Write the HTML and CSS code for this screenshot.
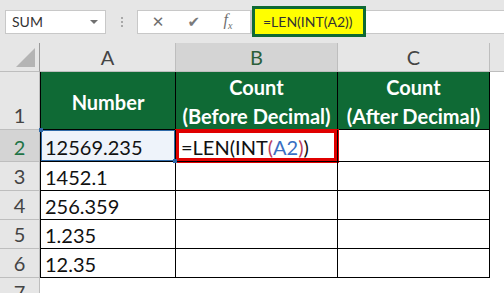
FILE: index.html
```html
<!DOCTYPE html>
<html lang="en">
<head>
  <meta charset="UTF-8">
  <title>LEN INT</title>
  <link rel="stylesheet" href="styles.css">
</head>
<body>
  <div class="topbar">
    <div class="namebox">
      <span>SUM</span>
      <span class="caret"></span>
    </div>
    <div class="grip"><i></i><i></i><i></i></div>
    <div class="fxbox">
      <span class="btn">&#x2715;</span>
      <span class="btn check">&#x2714;</span>
      <span class="btn fx">f<sub>x</sub></span>
    </div>
    <div class="formulabar">
      <div class="formula-hl">=LEN(INT(A2))</div>
    </div>
  </div>

  <div class="sheet">
    <div class="hd corner"><span class="tri"></span></div>
    <div class="hd col">A</div>
    <div class="hd col active">B</div>
    <div class="hd col">C</div>
    <div class="hd col rest"></div>

    <div class="hd row">1</div>
    <div class="cell title first">Number</div>
    <div class="cell title">Count<br>(Before Decimal)</div>
    <div class="cell title">Count<br>(After Decimal)</div>
    <div class="cell blank"></div>

    <div class="hd row active">2</div>
    <div class="cell first ref">12569.235</div>
    <div class="cell editing">=LEN(INT<span class="p">(</span><span class="a">A2</span><span class="p">)</span>)</div>
    <div class="cell"></div>
    <div class="cell blank"></div>

    <div class="hd row">3</div>
    <div class="cell first">1452.1</div>
    <div class="cell"></div>
    <div class="cell"></div>
    <div class="cell blank"></div>

    <div class="hd row">4</div>
    <div class="cell first">256.359</div>
    <div class="cell"></div>
    <div class="cell"></div>
    <div class="cell blank"></div>

    <div class="hd row">5</div>
    <div class="cell first">1.235</div>
    <div class="cell"></div>
    <div class="cell"></div>
    <div class="cell blank"></div>

    <div class="hd row">6</div>
    <div class="cell first">12.35</div>
    <div class="cell"></div>
    <div class="cell"></div>
    <div class="cell blank"></div>

    <div class="hd row">7</div>
    <div class="cell blank"></div>
    <div class="cell blank"></div>
    <div class="cell blank"></div>
    <div class="cell blank"></div>
  </div>
</body>
</html>
```

FILE: styles.css
```css
* {
  box-sizing: border-box;
}

body {
  margin: 0;
  width: 504px;
  height: 293px;
  overflow: hidden;
  background: #fff;
  font-family: Lato, "Open Sans", sans-serif;
  color: #111;
}

.topbar {
  height: 43px;
  background: #e6e6e6;
  display: flex;
  align-items: center;
  padding-left: 5px;
}

.namebox {
  width: 101px;
  height: 24px;
  background: #fff;
  border: 1px solid #c8c8c8;
  display: flex;
  align-items: center;
  justify-content: space-between;
  padding: 0 7px 0 6px;
  font-size: 14px;
  color: #333;
}

.caret {
  width: 0;
  height: 0;
  border-left: 4px solid transparent;
  border-right: 4px solid transparent;
  border-top: 4px solid #707070;
}

.grip {
  width: 31px;
  display: flex;
  flex-direction: column;
  align-items: center;
  gap: 2px;
}

.grip i {
  width: 2px;
  height: 2px;
  background: #a8a8a8;
}

.fxbox {
  width: 114px;
  height: 24px;
  background: #fff;
  border: 1px solid #c8c8c8;
  display: flex;
  align-items: center;
  justify-content: space-around;
  padding: 0 6px 0 2px;
  color: #6f6f6f;
}

.btn {
  font-size: 15px;
  font-family: "DejaVu Sans", sans-serif;
}

.check {
  color: #7a7a7a;
}

.fx {
  font-family: "Liberation Serif", serif;
  font-style: italic;
  font-size: 16px;
}

.fx sub {
  font-size: 10px;
}

.formulabar {
  flex: 1;
  height: 24px;
  background: #fff;
  border: 1px solid #c8c8c8;
  border-right: none;
  display: flex;
  align-items: center;
}

.formula-hl {
  width: 114px;
  height: 31px;
  margin: -1px 0 0 0;
  background: #ffff00;
  border: 3px solid #0f6a35;
  display: flex;
  align-items: center;
  padding-left: 8px;
  font-size: 14px;
  color: #333;
}

.sheet {
  display: grid;
  grid-template-columns: 40px 136px 162px 152px 1fr;
  grid-template-rows: 29px 58px 32px 29px 29px 29px 29px 29px;
}

.hd {
  background: #e6e6e6;
  border-right: 1px solid #bebebe;
  border-bottom: 1px solid #bebebe;
  color: #444;
  font-size: 20px;
  display: flex;
  justify-content: center;
}

.col {
  align-items: center;
}

.col.active {
  background: #d4d4d4;
  color: #2b5f3b;
}

.col.rest {
  border-right: none;
}

.row {
  align-items: flex-end;
  padding-bottom: 2px;
}

.row.active {
  background: #d4d4d4;
  color: #217346;
}

.corner {
  position: relative;
  border-right-color: #9a9a9a;
}

.tri {
  position: absolute;
  right: 4px;
  bottom: 4px;
  width: 0;
  height: 0;
  border-left: 19px solid transparent;
  border-bottom: 19px solid #b4b4b4;
}

.cell {
  border-right: 1px solid #000;
  border-bottom: 1px solid #000;
  font-size: 20px;
  display: flex;
  align-items: center;
  padding: 2px 0 0 4px;
}

.cell.first {
  border-left: 1px solid #000;
}

.cell.blank {
  border: none;
}

.title {
  background: #0f6a35;
  color: #fff;
  font-weight: bold;
  justify-content: center;
  text-align: center;
  line-height: 29px;
  padding: 3px 0 0;
}

.ref {
  position: relative;
  background: #eef3fa;
  box-shadow: inset 0 0 0 1px #2f6aa9;
}

.ref::before,
.ref::after {
  content: "";
  position: absolute;
  width: 4px;
  height: 4px;
  background: #2f6aa9;
}

.ref::before {
  left: -2px;
  top: -2px;
}

.ref::after {
  right: -2px;
  bottom: -2px;
}

.editing {
  box-shadow: 0 0 0 1px #e00000, inset 0 0 0 3px #e00000;
  padding-left: 5px;
}

.editing .p {
  color: #b8405e;
}

.editing .a {
  color: #3a6fc2;
}
```
